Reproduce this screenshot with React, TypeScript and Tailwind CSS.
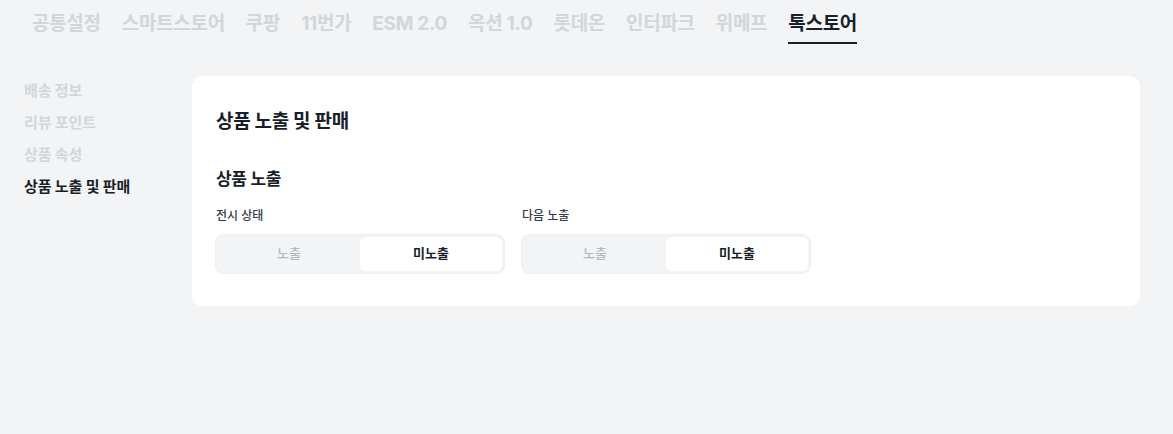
const tabs = ['공통설정', '스마트스토어', '쿠팡', '11번가', 'ESM 2.0', '옥션 1.0', '롯데온', '인터파크', '위메프', '톡스토어'];
const sideItems = ['배송 정보', '리뷰 포인트', '상품 속성', '상품 노출 및 판매'];

function Segment({ label }: { label: string }) {
  return (
    <div className="w-[288px]">
      <p className="text-[12px] leading-[16px] font-medium text-[#333d4b]">{label}</p>
      <div className="mt-[11px] flex h-[38px] rounded-lg bg-[#f2f4f6] p-[2px] ring-1 ring-[#eceef1]">
        <button className="flex-1 text-[13px] font-medium text-[#b0b8c1]">노출</button>
        <button className="flex-1 rounded-md bg-white text-[13px] font-bold text-[#191f28]">미노출</button>
      </div>
    </div>
  );
}

export default function App() {
  return (
    <div
      className="min-h-[434px] bg-[#f2f4f6]"
      style={{ fontFamily: 'Inter, "Noto Sans CJK KR", "Noto Sans", sans-serif' }}
    >
      <nav className="flex gap-[21px] px-[32px] pt-[10px]">
        {tabs.map((t) => (
          <div
            key={t}
            className={
              'border-b-2 pb-[4px] text-[19px] leading-[28px] font-bold tracking-[-0.3px] ' +
              (t === '톡스토어' ? 'border-[#191f28] text-[#191f28]' : 'border-transparent text-[#d1d6db]')
            }
          >
            {t}
          </div>
        ))}
      </nav>

      <div className="mt-[32px] flex gap-[60px] px-[24px]">
        <aside className="flex w-[108px] shrink-0 flex-col gap-[12px] pt-[5px]">
          {sideItems.map((s, i) => (
            <div
              key={s}
              className={
                'text-[15px] leading-[20px] font-bold tracking-[-0.1px] whitespace-nowrap ' +
                (i === sideItems.length - 1 ? 'text-[#191f28]' : 'text-[#d1d6db]')
              }
            >
              {s}
            </div>
          ))}
        </aside>

        <main className="mr-[9px] flex-1 rounded-[10px] bg-white px-[24px] pt-[32px] pb-[33px]">
          <h1 className="text-[19px] leading-[28px] font-bold tracking-[-0.3px] text-[#191f28]">상품 노출 및 판매</h1>
          <h2 className="mt-[30px] text-[17px] leading-[26px] font-bold tracking-[-0.3px] text-[#191f28]">상품 노출</h2>
          <div className="mt-[16px] flex gap-[18px]">
            <Segment label="전시 상태" />
            <Segment label="다음 노출" />
          </div>
        </main>
      </div>
    </div>
  );
}
